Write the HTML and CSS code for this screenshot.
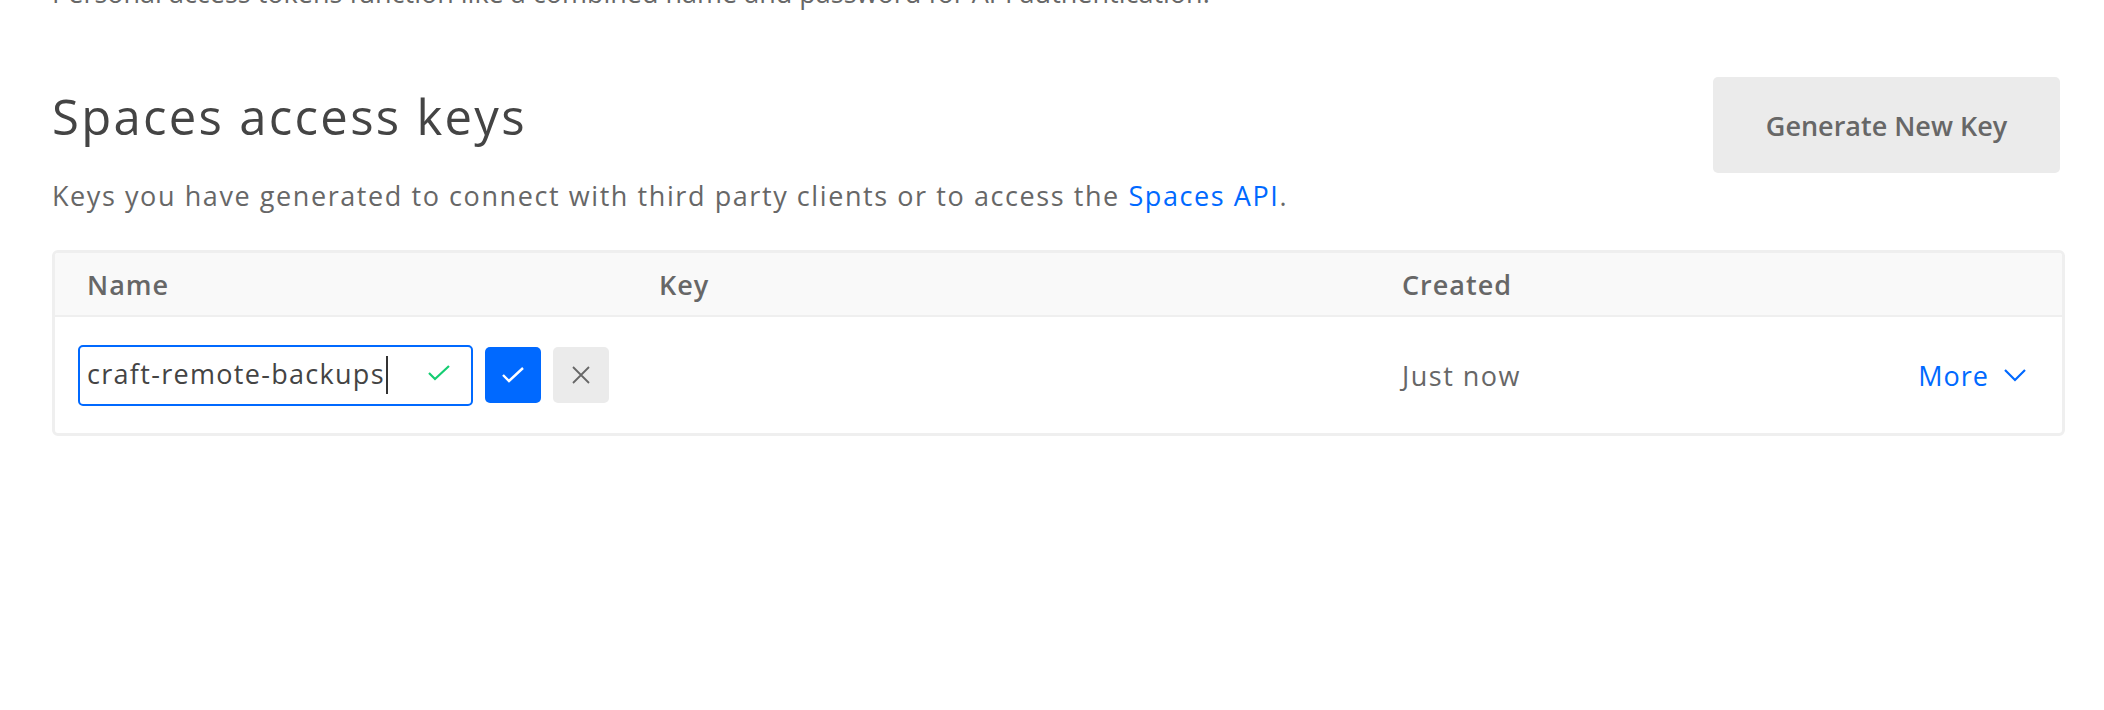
FILE: index.html
```html
<!DOCTYPE html>
<html>
<head>
    <meta charset="UTF-8">
    <title>Spaces access keys</title>
    <link rel="stylesheet" href="styles.css">
</head>
<body>
    <div class="page">
        <p class="intro">Personal access tokens function like a combined name and password for API authentication.</p>

        <div class="section-head">
            <div class="section-title">
                <h2>Spaces access keys</h2>
                <p class="lead">Keys you have generated to connect with third party clients or to access the <a href="#">Spaces API</a>.</p>
            </div>
            <button class="btn-generate">Generate New Key</button>
        </div>

        <div class="keys-table">
            <div class="row row-head">
                <div class="cell">Name</div>
                <div class="cell">Key</div>
                <div class="cell">Created</div>
                <div class="cell"></div>
            </div>
            <div class="row row-body">
                <div class="cell cell-name">
                    <div class="name-input">
                        <span class="value">craft-remote-backups</span><span class="caret"></span>
                        <svg class="valid" width="24" height="18" viewBox="0 0 24 18"><polyline points="2 9 8 15 22 2" fill="none" stroke="#15cd72" stroke-width="2.2"/></svg>
                    </div>
                    <button class="icon-btn ok">
                        <svg width="24" height="18" viewBox="0 0 24 18"><polyline points="2 9 8 15 22 2" fill="none" stroke="#fff" stroke-width="2.4"/></svg>
                    </button>
                    <button class="icon-btn cancel">
                        <svg width="20" height="20" viewBox="0 0 20 20"><path d="M2 2 L18 18 M18 2 L2 18" fill="none" stroke="#676767" stroke-width="1.8"/></svg>
                    </button>
                </div>
                <div class="cell"></div>
                <div class="cell cell-created">Just now</div>
                <div class="cell cell-more">
                    <a href="#" class="more">More
                        <svg width="24" height="14" viewBox="0 0 24 14"><polyline points="2 2 12 12 22 2" fill="none" stroke="#0069ff" stroke-width="2.2"/></svg>
                    </a>
                </div>
            </div>
        </div>
    </div>
</body>
</html>
```

FILE: styles.css
```css
body {
    margin: 0;
    padding: 0;
    background: #fff;
    font-family: "Open Sans", Lato, sans-serif;
    color: #676767;
    overflow: hidden;
}

.page {
    padding: 0 39px 0 52px;
}

.intro {
    margin: -25px 0 0 0;
    font-size: 27px;
    line-height: 36px;
    color: #676767;
    white-space: nowrap;
}

.section-head {
    display: flex;
    justify-content: space-between;
    align-items: flex-start;
    margin-top: 66px;
}

.section-title h2 {
    margin: 11px 0 0 0;
    font-size: 49px;
    line-height: 56px;
    font-weight: 400;
    letter-spacing: 2.3px;
    color: #444;
}

.lead {
    margin: 34px 0 0 0;
    font-size: 27px;
    line-height: 36px;
    letter-spacing: 1.58px;
    color: #676767;
}

.lead a {
    color: #0069ff;
    text-decoration: none;
}

.btn-generate {
    width: 347px;
    height: 96px;
    margin-right: 5px;
    background: #ebebeb;
    border: none;
    border-radius: 5px;
    font-family: "Open Sans", Lato, sans-serif;
    font-size: 27px;
    font-weight: 600;
    color: #676767;
    cursor: pointer;
}

.keys-table {
    margin-top: 36px;
    border: 3px solid #efefef;
    border-radius: 6px;
    overflow: hidden;
}

.row {
    display: grid;
    grid-template-columns: 572px 743px 1fr auto;
    align-items: center;
}

.row-head {
    background: #f9f9f9;
    border-bottom: 2px solid #efefef;
    height: 62px;
    font-size: 27px;
    font-weight: 600;
    letter-spacing: 1px;
    color: #676767;
}

.row-head .cell {
    padding-left: 32px;
}

.row-body {
    height: 116px;
    font-size: 27px;
    letter-spacing: 1.5px;
    color: #676767;
}

.cell-name {
    display: flex;
    align-items: center;
    gap: 12px;
    padding-left: 23px;
}

.name-input {
    position: relative;
    box-sizing: border-box;
    width: 395px;
    height: 61px;
    border: 2px solid #0069ff;
    border-radius: 5px;
    padding: 0 0 3px 7px;
    display: flex;
    align-items: center;
    letter-spacing: 1.3px;
    color: #444;
}

.caret {
    display: inline-block;
    width: 2px;
    height: 38px;
    margin: 3px 0 0 1px;
    background: #333;
}

.valid {
    position: absolute;
    right: 20px;
    top: 17px;
}

.icon-btn {
    width: 56px;
    height: 56px;
    border: none;
    border-radius: 5px;
    display: flex;
    align-items: center;
    justify-content: center;
    padding: 0;
    cursor: pointer;
}

.icon-btn.ok {
    background: #0069ff;
}

.icon-btn.cancel {
    background: #ebebeb;
}

.cell-created {
    padding-left: 32px;
}

.cell-more {
    padding-right: 35px;
}

.more {
    display: flex;
    align-items: center;
    gap: 14px;
    letter-spacing: 1px;
    color: #0069ff;
    text-decoration: none;
}
```
